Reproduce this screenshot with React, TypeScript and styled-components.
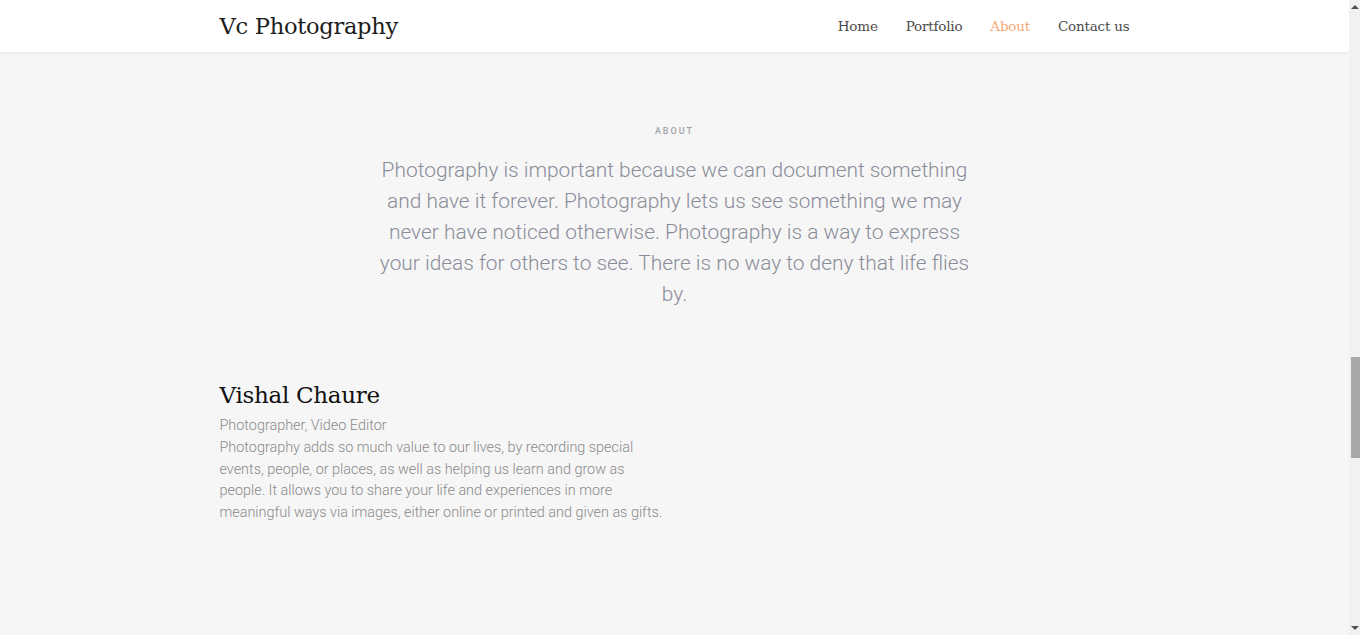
import React from 'react';
import styled, { createGlobalStyle } from 'styled-components';

const GlobalStyle = createGlobalStyle`
    html, body {
        margin: 0;
        padding: 0;
        height: 100%;
        overflow: hidden;
    }
    * {
        box-sizing: border-box;
    }
`;

const navLinks = ['Home', 'Portfolio', 'About', 'Contact us'];

// where the page sits in its scroll: thumb offset and size, in px
const scrollThumb = { top: 343, height: 101 };

export default function App() {
    return (
        <Window>
            <GlobalStyle />
            <Page>
                <Navbar>
                    <Container className="nav-inner">
                        <Brand>Vc Photography</Brand>
                        <NavList>
                            {navLinks.map(link => (
                                <NavItem key={link} $active={link === 'About'}>
                                    {link}
                                </NavItem>
                            ))}
                        </NavList>
                    </Container>
                </Navbar>

                <AboutSection>
                    <Container>
                        <Label>About</Label>
                        <Lead>
                            Photography is important because we can document something and have
                            it forever. Photography lets us see something we may never have
                            noticed otherwise. Photography is a way to express your ideas for
                            others to see. There is no way to deny that life flies by.
                        </Lead>
                        <Row>
                            <Person>
                                <Name>Vishal Chaure</Name>
                                <Role>Photographer, Video Editor</Role>
                                <Bio>
                                    Photography adds so much value to our lives, by recording
                                    special events, people, or places, as well as helping us learn
                                    and grow as people. It allows you to share your life and
                                    experiences in more meaningful ways via images, either online
                                    or printed and given as gifts.
                                </Bio>
                            </Person>
                            <div />
                        </Row>
                    </Container>
                </AboutSection>
            </Page>

            <ScrollRail>
                <ScrollArrow $dir="up" />
                <ScrollTrack>
                    <ScrollThumb
                        style={{ marginTop: scrollThumb.top, height: scrollThumb.height }}
                    />
                </ScrollTrack>
                <ScrollArrow $dir="down" />
            </ScrollRail>
        </Window>
    );
}

const Window = styled.div`
    display: flex;
    height: 100vh;
    background: #f6f6f6;
    font-family: Roboto, 'Liberation Sans', sans-serif;
`;

const Page = styled.main`
    flex: 1;
    min-width: 0;
    overflow: hidden;
`;

const Container = styled.div`
    width: 940px;
    margin: 0 auto;
    padding: 0 15px;
`;

const Navbar = styled.header`
    position: relative;
    z-index: 1;
    height: 52px;
    background: #fff;
    box-shadow: 0 1px 4px rgba(0, 0, 0, 0.08);

    .nav-inner {
        height: 100%;
        display: flex;
        align-items: center;
        justify-content: space-between;
    }
`;

const Brand = styled.div`
    font-family: 'DejaVu Serif', 'Liberation Serif', serif;
    font-size: 22.6px;
    color: #1c1c1c;
    letter-spacing: -0.3px;
    padding-bottom: 1px;
`;

const NavList = styled.nav`
    display: flex;
    gap: 28px;
`;

const NavItem = styled.a<{ $active?: boolean }>`
    font-family: 'DejaVu Serif', 'Liberation Serif', serif;
    font-size: 13.5px;
    letter-spacing: -0.2px;
    color: ${p => (p.$active ? '#f5a878' : '#4a4a4a')};
    cursor: pointer;
    padding-bottom: 1px;
`;

const AboutSection = styled.section`
    padding-top: 72px;
`;

const Label = styled.h6`
    margin: 0;
    text-align: center;
    font-size: 9px;
    line-height: 14px;
    font-weight: 500;
    letter-spacing: 2px;
    text-transform: uppercase;
    color: #a3a3aa;
`;

const Lead = styled.p`
    max-width: 600px;
    margin: 17px auto 0;
    text-align: center;
    font-size: 20.9px;
    line-height: 31px;
    font-weight: 300;
    color: #8a8d99;
`;

const Row = styled.div`
    display: grid;
    grid-template-columns: 448px 1fr;
    gap: 15px;
    margin-top: 70px;
`;

const Person = styled.div`
    display: flex;
    flex-direction: column;
`;

const Name = styled.h2`
    margin: 0;
    font-family: 'DejaVu Serif', 'Liberation Serif', serif;
    font-weight: 400;
    font-size: 23px;
    line-height: 30px;
    letter-spacing: -0.3px;
    color: #111;
`;

const Role = styled.div`
    margin-top: 6px;
    font-size: 14.4px;
    line-height: 20px;
    font-weight: 300;
    color: #8a8a8a;
`;

const Bio = styled.p`
    margin: 1px 0 0;
    font-size: 14.4px;
    line-height: 21.7px;
    font-weight: 300;
    color: #8a8a8a;
`;

const ScrollRail = styled.div`
    width: 11px;
    display: flex;
    flex-direction: column;
    background: #f1f1f1;
`;

const ScrollArrow = styled.div<{ $dir: 'up' | 'down' }>`
    height: 14px;
    display: flex;
    align-items: center;
    justify-content: center;
    padding-left: 1px;

    &::before {
        content: '';
        width: 0;
        height: 0;
        border-left: 4px solid transparent;
        border-right: 4px solid transparent;
        ${p =>
            p.$dir === 'up'
                ? 'border-bottom: 4px solid #505050;'
                : 'border-top: 4px solid #505050;'}
    }
`;

const ScrollTrack = styled.div`
    flex: 1;
    padding-left: 2px;
`;

const ScrollThumb = styled.div`
    background: #a8a8a8;
`;
